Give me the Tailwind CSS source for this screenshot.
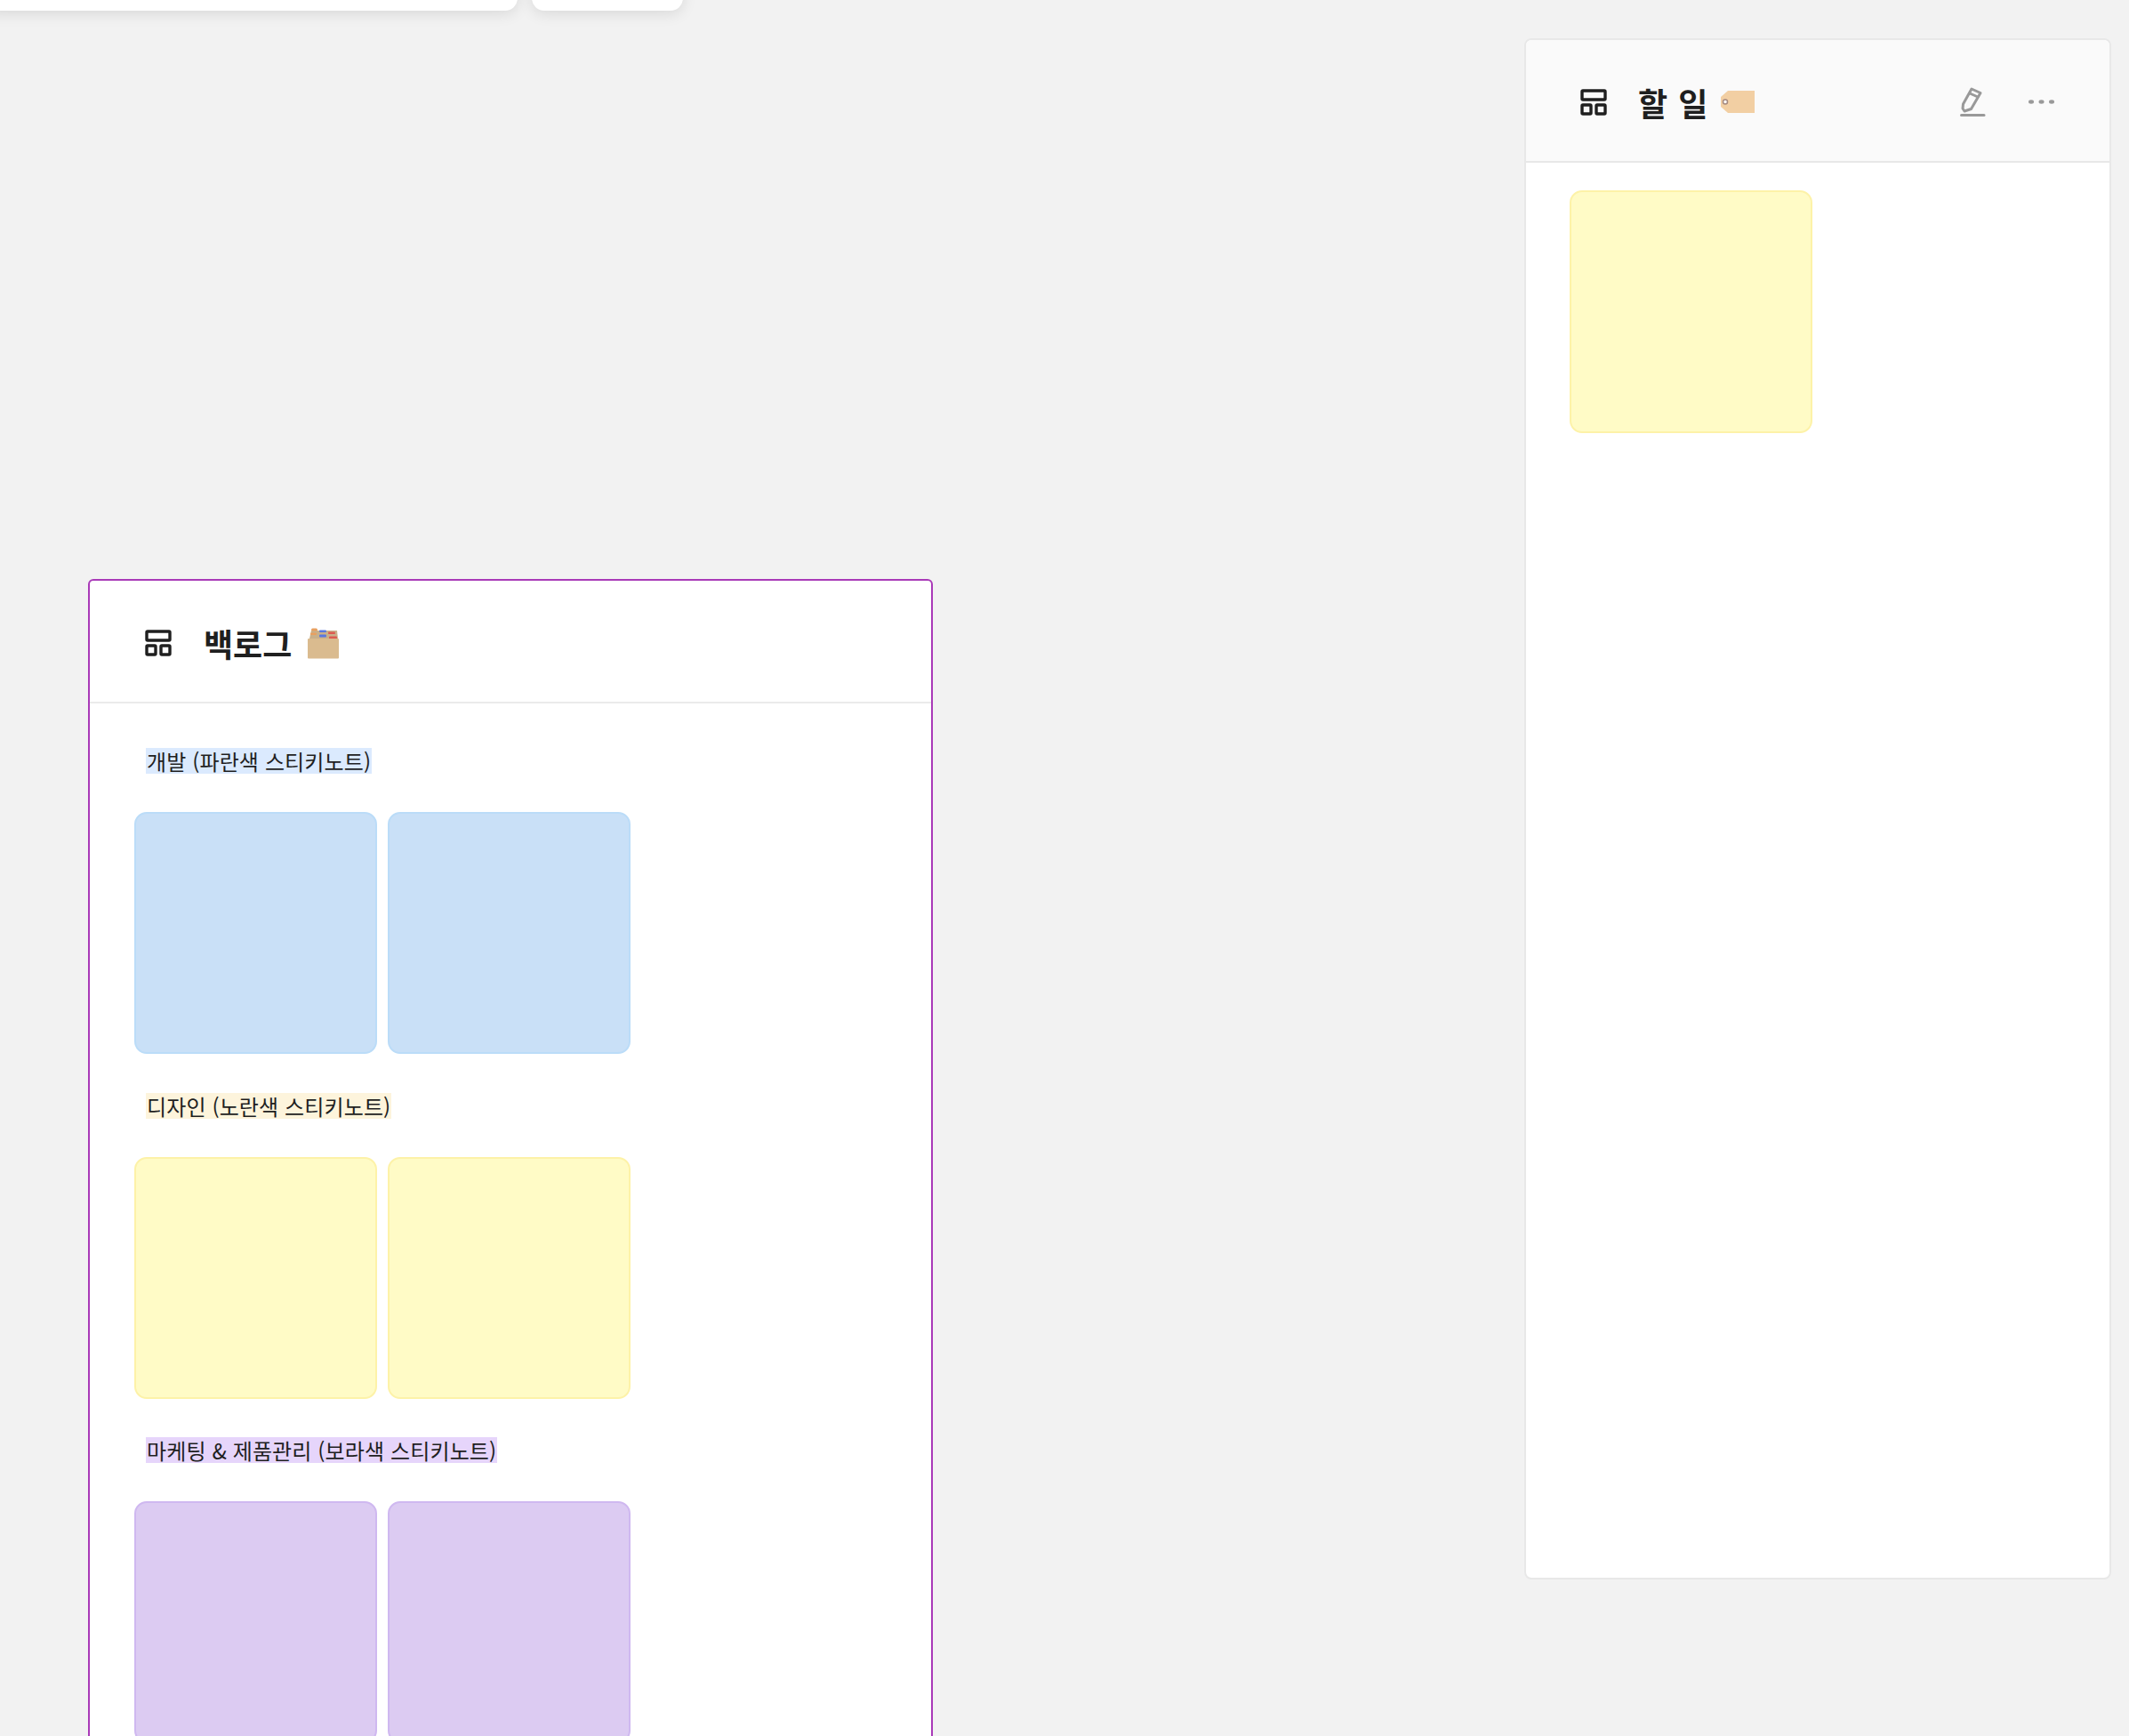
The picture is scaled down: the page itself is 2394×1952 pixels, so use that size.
<!DOCTYPE html>
<html lang="ko">
<head>
    <meta charset="UTF-8">
    <meta name="viewport" content="width=device-width, initial-scale=1.0">
    <title>Board</title>
    <script src="https://cdn.jsdelivr.net/npm/@tailwindcss/browser@4"></script>
</head>
<body class="bg-[#f2f2f2] font-['Noto_Sans_CJK_KR','Noto_Sans',sans-serif] text-[#1f1f1f]">
    <!-- Board canvas -->
    <div class="relative w-[2394px] h-[1952px] overflow-hidden">
        <!-- Toolbar cards cut off by the top edge -->
        <div class="absolute left-[-20px] top-[-40px] w-[602px] h-[52px] bg-white rounded-[14px] shadow-[0_4px_16px_rgba(0,0,0,0.1)]"></div>
        <div class="absolute left-[598px] top-[-40px] w-[170px] h-[52px] bg-white rounded-[14px] shadow-[0_4px_16px_rgba(0,0,0,0.1)]"></div>

        <!-- Backlog column -->
        <section class="absolute left-[99px] top-[651px] w-[950px] h-[1400px] bg-white border-2 border-[#a93ab8] rounded-[6px]">
            <header class="flex items-center h-[138px] pl-[62px] pt-[3px] border-b-2 border-[#ebebeb]">
                <svg class="w-[30px] h-[30px] shrink-0" viewBox="0 0 30 30" fill="none" stroke="#1f1f1f" stroke-width="3.4" stroke-linejoin="round">
                    <rect x="2" y="2" width="26" height="10" rx="1"/>
                    <rect x="2" y="18" width="10" height="10" rx="1"/>
                    <rect x="18" y="18" width="10" height="10" rx="1"/>
                </svg>
                <h2 class="ml-[36px] text-[36px] font-bold">백로그</h2>
                <svg class="ml-[16px] w-[38px] h-[38px]" viewBox="0 0 38 38">
                    <path d="M4 14 L6 5 H35 L36 14 Z" fill="#c9b08a"/>
                    <rect x="6" y="2.5" width="7" height="3" rx="1.5" fill="#e8a060"/>
                    <rect x="5" y="7.5" width="7" height="2.5" rx="1" fill="#e8a060"/>
                    <rect x="15" y="4.5" width="8" height="2.5" rx="1" fill="#5a78e0"/>
                    <rect x="15" y="9.5" width="8" height="3" rx="1" fill="#5a78e0"/>
                    <rect x="25" y="6.5" width="8" height="2.5" rx="1" fill="#dd5a50"/>
                    <rect x="26" y="11.5" width="9" height="3" rx="1" fill="#dd5a50"/>
                    <rect x="2" y="14" width="35" height="22.5" rx="1" fill="#dabb8f"/>
                </svg>
            </header>
            <div class="pl-[50px] pt-[50px]">
                <p class="ml-[13px] w-fit h-[29px] px-[1px] bg-[#dbeafe] text-[24px] leading-[29px] tracking-[0.12px]">개발 (파란색 스티키노트)</p>
                <div class="flex gap-[12px] mt-[43px]">
                    <div class="w-[273px] h-[272px] rounded-[14px] bg-[#c9e0f7] border-2 border-[#bbdcf8]"></div>
                    <div class="w-[273px] h-[272px] rounded-[14px] bg-[#c9e0f7] border-2 border-[#bbdcf8]"></div>
                </div>
                <p class="mt-[43.5px] ml-[13px] w-fit h-[29px] px-[1px] bg-[#fdf4dc] text-[24px] leading-[29px] tracking-[0.12px]">디자인 (노란색 스티키노트)</p>
                <div class="flex gap-[12px] mt-[43px]">
                    <div class="w-[273px] h-[272px] rounded-[14px] bg-[#fffbc6] border-2 border-[#fdf2a8]"></div>
                    <div class="w-[273px] h-[272px] rounded-[14px] bg-[#fffbc6] border-2 border-[#fdf2a8]"></div>
                </div>
                <p class="mt-[43.5px] ml-[13px] w-fit h-[29px] px-[1px] bg-[#e6d5fb] text-[24px] leading-[29px] tracking-[0.12px]">마케팅 &amp; 제품관리 (보라색 스티키노트)</p>
                <div class="flex gap-[12px] mt-[43px]">
                    <div class="w-[273px] h-[272px] rounded-[14px] bg-[#dccbf2] border-2 border-[#cfb8f0]"></div>
                    <div class="w-[273px] h-[272px] rounded-[14px] bg-[#dccbf2] border-2 border-[#cfb8f0]"></div>
                </div>
            </div>
        </section>

        <!-- To-do column -->
        <section class="absolute left-[1714px] top-[43px] w-[660px] h-[1733px] bg-white border-2 border-[#e8e8e8] rounded-[8px] overflow-hidden">
            <header class="flex items-center h-[138px] pl-[61px] pr-[62px] pt-[3px] bg-[#fafafa] border-b-2 border-[#e8e8e8]">
                <svg class="w-[30px] h-[30px] shrink-0" viewBox="0 0 30 30" fill="none" stroke="#1f1f1f" stroke-width="3.4" stroke-linejoin="round">
                    <rect x="2" y="2" width="26" height="10" rx="1"/>
                    <rect x="2" y="18" width="10" height="10" rx="1"/>
                    <rect x="18" y="18" width="10" height="10" rx="1"/>
                </svg>
                <h2 class="ml-[35px] text-[36px] font-bold tracking-[1px]">할 일</h2>
                <svg class="ml-[13px] w-[40px] h-[26px]" viewBox="0 0 40 26">
                    <path d="M9 0 H39 V25 H9 L1 18 V7 Z" fill="#f2cfa3"/>
                    <circle cx="6" cy="12.5" r="2.5" fill="#fff" stroke="#a58a80" stroke-width="1.5"/>
                </svg>
                <div class="ml-auto flex items-center gap-[47px]">
                    <svg class="w-[30px] h-[34px]" viewBox="0 0 30 34" fill="none" stroke="#999" stroke-width="3" stroke-linejoin="round" stroke-linecap="round">
                        <path d="M13 2 L23 6.5 L12.5 24.5 L5 27 L3 24 L3.5 19 Z"/>
                        <path d="M11 7 L20 11"/>
                        <path d="M1.5 31.5 H27"/>
                    </svg>
                    <svg class="w-[29px] h-[5px]" viewBox="0 0 29 5" fill="#999">
                        <ellipse cx="3" cy="2.5" rx="3" ry="2.2"/>
                        <ellipse cx="14.5" cy="2.5" rx="3" ry="2.2"/>
                        <ellipse cx="26" cy="2.5" rx="3" ry="2.2"/>
                    </svg>
                </div>
            </header>
            <div class="pl-[49px] pt-[31px]">
                <div class="w-[273px] h-[273px] rounded-[14px] bg-[#fffbc6] border-2 border-[#fdf2a8]"></div>
            </div>
        </section>
    </div>
</body>
</html>
